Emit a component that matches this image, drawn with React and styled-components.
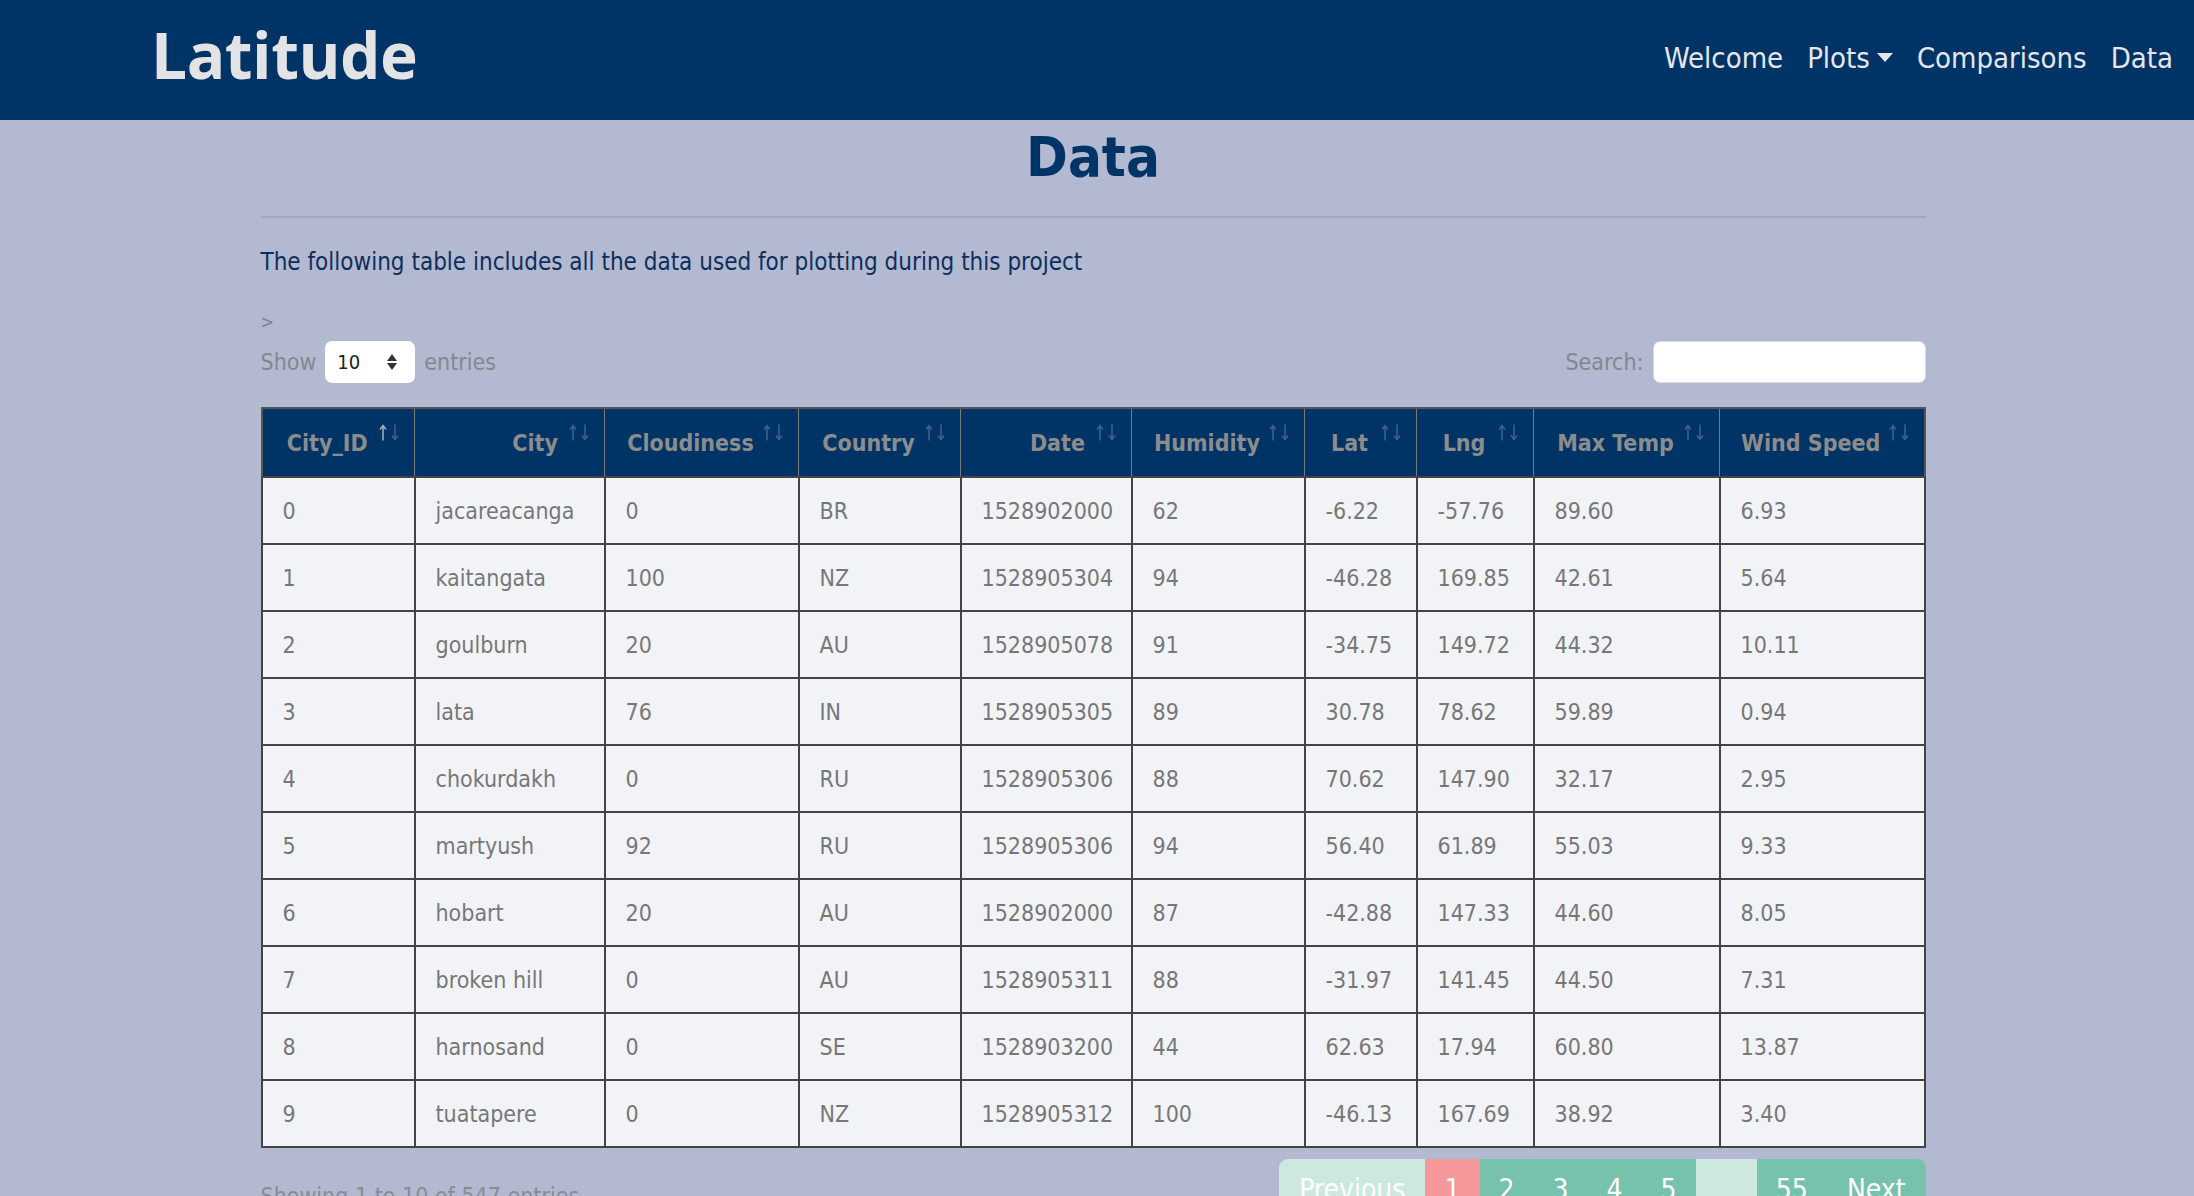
import React from "react";
import styled, { createGlobalStyle } from "styled-components";

const Global = createGlobalStyle`
  html, body { margin: 0; padding: 0; }
  body {
    background: #b3b9d0;
    font-family: "DejaVu Sans", "Liberation Sans", sans-serif;
    font-stretch: condensed;
  }
  * { box-sizing: border-box; }
`;

const NavBar = styled.nav`
  height: 120px;
  background: #003366;
  display: flex;
  align-items: center;
  justify-content: space-between;
  padding: 0 21px 0 151px;
`;

const Brand = styled.div`
  font-family: "Open Sans", sans-serif;
  font-stretch: normal;
  font-weight: 700;
  font-size: 64px;
  letter-spacing: -0.5px;
  color: #e3e3e6;
  line-height: 1;
  margin-top: -10px;
`;

const NavLinks = styled.div`
  display: flex;
  align-items: center;
  gap: 24px;
  margin-top: -5px;
`;

const NavLink = styled.a`
  color: #e6e6ea;
  font-size: 29px;
  text-decoration: none;
  display: flex;
  align-items: center;
`;

const Caret = styled.span`
  display: inline-block;
  margin-left: 7px;
  width: 0;
  height: 0;
  border-left: 8px solid transparent;
  border-right: 8px solid transparent;
  border-top: 9px solid #e6e6ea;
`;

const Container = styled.main`
  width: 1665px;
  margin: 0 auto;
  transform: translateX(-4px);
`;

const Title = styled.h1`
  margin: 1px 0 0;
  text-align: center;
  font-size: 56px;
  line-height: 72px;
  font-weight: 700;
  color: #003366;
`;

const Rule = styled.hr`
  margin: 23px 0 0;
  border: 0;
  border-top: 2px solid #a2a8bf;
`;

const Lead = styled.p`
  margin: 27px 0 0;
  font-size: 24px;
  line-height: 34px;
  color: #0d2e5c;
`;

const Stray = styled.div`
  margin-top: 31px;
  font-size: 18px;
  line-height: 24px;
  color: #7d8194;
`;

const Controls = styled.div`
  display: flex;
  justify-content: space-between;
  align-items: center;
  margin-top: 7px;
  height: 42px;
`;

const Label = styled.label`
  display: flex;
  align-items: center;
  gap: 9px;
  font-size: 23px;
  color: #85878f;
`;

const SelectBox = styled.div`
  width: 90px;
  height: 42px;
  background: #fff;
  border-radius: 7px;
  display: flex;
  align-items: center;
  justify-content: space-between;
  padding: 0 18px 0 12px;
  color: #222;
  font-size: 20px;
`;

const Spinner = styled.span`
  display: flex;
  flex-direction: column;
  align-items: center;
  gap: 2px;
  &::before, &::after {
    content: "";
    width: 0;
    height: 0;
    border-left: 5px solid transparent;
    border-right: 5px solid transparent;
  }
  &::before { border-bottom: 7px solid #333; }
  &::after { border-top: 7px solid #333; }
`;

const SearchInput = styled.div`
  width: 273px;
  height: 42px;
  background: #fff;
  border-radius: 7px;
  border: 1px solid #d8dae3;
`;

const Table = styled.table`
  margin-top: 24px;
  width: 1663px;
  table-layout: fixed;
  border-collapse: collapse;
  border: 2px solid #555;
`;

const Col = styled.col`
  width: ${(p) => p.$w}px;
`;

const Th = styled.th`
  position: relative;
  height: 69px;
  background: #003366;
  color: #8c8c8c;
  font-size: 23px;
  font-weight: 700;
  text-align: ${(p) => p.$align};
  padding: 0 ${(p) => (p.$align === "right" ? 46 : 40)}px 0 18px;
  border-left: 1px solid #7a7a7a;
  border-right: 1px solid #7a7a7a;
`;

const Sort = styled.span`
  position: absolute;
  top: 15px;
  right: 15px;
  display: flex;
  gap: 4px;
`;

const ArrowSvg = styled.svg`
  display: block;
  width: 8px;
  height: 17px;
  color: ${(p) => (p.$on ? "#a0a9b6" : "#3f5f86")};
`;

const ArrowUp = ({ on }) => (
  <ArrowSvg $on={on} viewBox="0 0 8 17">
    <path d="M4 1.5V16.5M1 5.5L4 1.5L7 5.5" fill="none" stroke="currentColor" strokeWidth="1.6" />
  </ArrowSvg>
);

const ArrowDown = ({ on }) => (
  <ArrowSvg $on={on} viewBox="0 0 8 17">
    <path d="M4 0.5V15.5M1 11.5L4 15.5L7 11.5" fill="none" stroke="currentColor" strokeWidth="1.6" />
  </ArrowSvg>
);

const Td = styled.td`
  height: 67px;
  background: #f2f3f7;
  color: #777;
  font-size: 23px;
  padding: 0 20px;
  border: 2px solid #444;
  white-space: nowrap;
`;

const Footer = styled.div`
  display: flex;
  justify-content: space-between;
  align-items: flex-start;
  margin-top: 11px;
`;

const Info = styled.div`
  margin-top: 20px;
  font-size: 23px;
  line-height: 34px;
  color: #8a8c94;
`;

const Pager = styled.div`
  display: flex;
  border-radius: 9px 9px 0 0;
  overflow: hidden;
`;

const PageBtn = styled.span`
  display: block;
  height: 72px;
  padding: 14px ${(p) => p.$px}px 0;
  font-size: 28px;
  line-height: 34px;
  color: ${(p) => (p.$ghost ? "rgba(255,255,255,0.15)" : "#fff")};
  background: ${(p) =>
    p.$kind === "active" ? "#f4989a" : p.$kind === "disabled" ? "#cce8df" : "#77c2ad"};
`;

const columns = [
  { name: "City_ID", w: 153, align: "center", on: true },
  { name: "City", w: 190, align: "right" },
  { name: "Cloudiness", w: 194, align: "center" },
  { name: "Country", w: 162, align: "center" },
  { name: "Date", w: 171, align: "right" },
  { name: "Humidity", w: 173, align: "center" },
  { name: "Lat", w: 112, align: "center" },
  { name: "Lng", w: 117, align: "center" },
  { name: "Max Temp", w: 186, align: "center" },
  { name: "Wind Speed", w: 205, align: "center" },
];

const rows = [
  ["0", "jacareacanga", "0", "BR", "1528902000", "62", "-6.22", "-57.76", "89.60", "6.93"],
  ["1", "kaitangata", "100", "NZ", "1528905304", "94", "-46.28", "169.85", "42.61", "5.64"],
  ["2", "goulburn", "20", "AU", "1528905078", "91", "-34.75", "149.72", "44.32", "10.11"],
  ["3", "lata", "76", "IN", "1528905305", "89", "30.78", "78.62", "59.89", "0.94"],
  ["4", "chokurdakh", "0", "RU", "1528905306", "88", "70.62", "147.90", "32.17", "2.95"],
  ["5", "martyush", "92", "RU", "1528905306", "94", "56.40", "61.89", "55.03", "9.33"],
  ["6", "hobart", "20", "AU", "1528902000", "87", "-42.88", "147.33", "44.60", "8.05"],
  ["7", "broken hill", "0", "AU", "1528905311", "88", "-31.97", "141.45", "44.50", "7.31"],
  ["8", "harnosand", "0", "SE", "1528903200", "44", "62.63", "17.94", "60.80", "13.87"],
  ["9", "tuatapere", "0", "NZ", "1528905312", "100", "-46.13", "167.69", "38.92", "3.40"],
];

const pages = [
  { t: "Previous", kind: "disabled", px: 20 },
  { t: "1", kind: "active", px: 19 },
  { t: "2", px: 19 },
  { t: "3", px: 19 },
  { t: "4", px: 19 },
  { t: "5", px: 19 },
  { t: "…", kind: "disabled", px: 18, ghost: true },
  { t: "55", px: 19 },
  { t: "Next", px: 20 },
];

export default function App() {
  return (
    <>
      <Global />
      <NavBar>
        <Brand>Latitude</Brand>
        <NavLinks>
          <NavLink>Welcome</NavLink>
          <NavLink>
            Plots
            <Caret />
          </NavLink>
          <NavLink>Comparisons</NavLink>
          <NavLink>Data</NavLink>
        </NavLinks>
      </NavBar>
      <Container>
        <Title>Data</Title>
        <Rule />
        <Lead>The following table includes all the data used for plotting during this project</Lead>
        <Stray>&gt;</Stray>
        <Controls>
          <Label>
            Show
            <SelectBox>
              10
              <Spinner />
            </SelectBox>
            entries
          </Label>
          <Label>
            Search:
            <SearchInput />
          </Label>
        </Controls>
        <Table>
          <colgroup>
            {columns.map((c) => (
              <Col key={c.name} $w={c.w} />
            ))}
          </colgroup>
          <thead>
            <tr>
              {columns.map((c) => (
                <Th key={c.name} $align={c.align}>
                  {c.name}
                  <Sort>
                    <ArrowUp on={c.on} />
                    <ArrowDown />
                  </Sort>
                </Th>
              ))}
            </tr>
          </thead>
          <tbody>
            {rows.map((r) => (
              <tr key={r[0]}>
                {r.map((v, i) => (
                  <Td key={i}>{v}</Td>
                ))}
              </tr>
            ))}
          </tbody>
        </Table>
        <Footer>
          <Info>Showing 1 to 10 of 547 entries</Info>
          <Pager>
            {pages.map((p) => (
              <PageBtn key={p.t} $kind={p.kind} $px={p.px} $ghost={p.ghost}>
                {p.t}
              </PageBtn>
            ))}
          </Pager>
        </Footer>
      </Container>
    </>
  );
}
